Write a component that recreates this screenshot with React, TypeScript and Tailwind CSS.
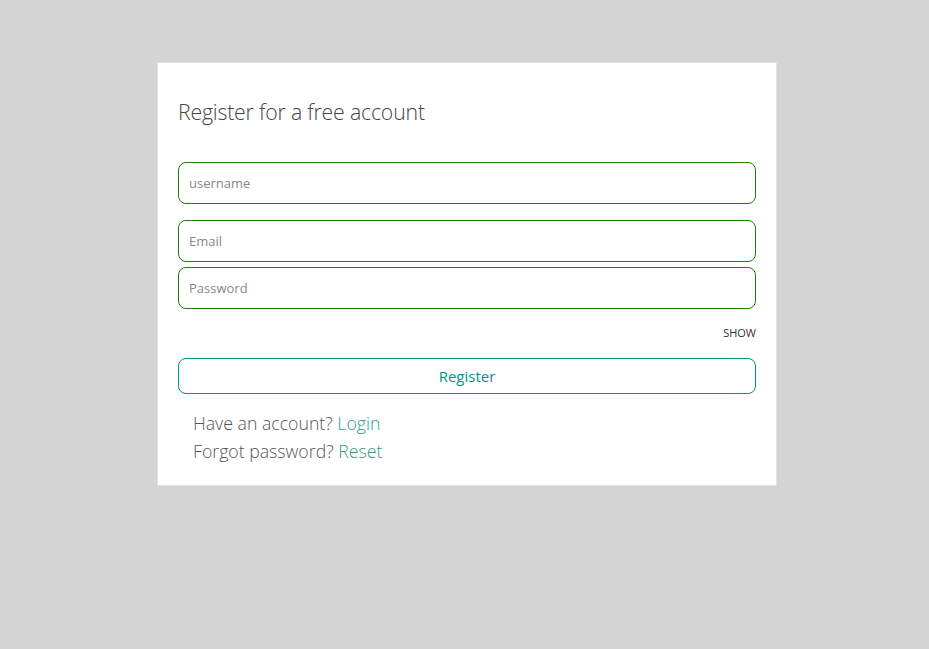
export default function App() {
  return (
    <div
      className="min-h-screen bg-[#d4d4d4] pt-[62px]"
      style={{ fontFamily: '"Open Sans", "Noto Sans", sans-serif' }}
    >
      <div className="ml-[157px] w-[620px] bg-white border border-[#e2e2e2] px-5 pt-[34px] pb-[20px]">
        <h1 className="text-[21.3px] font-light text-[#444] leading-[30px] tracking-[-0.2px]">
          Register for a free account
        </h1>

        <form className="mt-[35px]">
          <input
            placeholder="username"
            className="block w-full h-[42px] rounded-lg border border-[#1f7d00] px-[10px] text-[13px] text-[#333] placeholder:text-[#888] outline-none"
          />
          <input
            placeholder="Email"
            className="mt-4 block w-full h-[42px] rounded-lg border border-[#1f7d00] px-[10px] text-[13px] text-[#333] placeholder:text-[#888] outline-none"
          />
          <input
            placeholder="Password"
            type="password"
            className="mt-[5px] block w-full h-[42px] rounded-lg border border-[#1f7d00] px-[10px] text-[13px] text-[#333] placeholder:text-[#888] outline-none"
          />

          <div className="mt-[17px] flex justify-end">
            <span className="text-[11px] text-[#333] leading-[14px]">SHOW</span>
          </div>

          <button
            type="button"
            className="mt-[18px] block w-full h-[36px] rounded-lg border border-[#00977e] text-[15px] text-[#00978a] bg-white"
          >
            Register
          </button>
        </form>

        <div className="mt-[15px] pl-[15px] text-[17.7px] font-light text-[#555] leading-[28px]">
          <p>
            Have an account? <a className="text-[#2a9d95]">Login</a>
          </p>
          <p>
            Forgot password? <a className="text-[#3a9a7e]">Reset</a>
          </p>
        </div>
      </div>
    </div>
  )
}
